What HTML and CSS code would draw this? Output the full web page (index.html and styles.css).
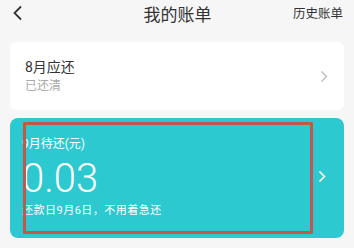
FILE: index.html
```html
<!DOCTYPE html>
<html lang="zh-CN">

<head>
  <meta charset="UTF-8">
  <meta name="viewport" content="width=device-width, initial-scale=1.0">
  <title>我的账单</title>
  <link rel="stylesheet" href="styles.css">
</head>

<body>
  <!-- 顶部导航 -->
  <div class="header">
    <span class="back">
      <svg width="11" height="16" viewBox="0 0 11 16">
        <polyline points="9,1.5 2.5,8 9,14.5" fill="none" stroke="#333" stroke-width="1.8" />
      </svg>
    </span>
    <span class="title">我的账单</span>
    <span class="history">历史账单</span>
  </div>

  <!-- 上月账单 -->
  <div class="card bill-paid">
    <div class="bill-info">
      <div class="bill-month">8月应还</div>
      <div class="bill-status">已还清</div>
    </div>
    <svg class="arrow" width="8" height="13" viewBox="0 0 8 13">
      <polyline points="1.5,1.5 6.5,6.5 1.5,11.5" fill="none" stroke="#bbb" stroke-width="1.3" />
    </svg>
  </div>

  <!-- 本月待还 -->
  <div class="card bill-due">
    <div class="bill-info">
      <div class="due-label">9月待还(元)</div>
      <div class="due-amount">0.03</div>
      <div class="due-tip">还款日9月6日，不用着急还</div>
    </div>
    <svg class="arrow" width="8" height="13" viewBox="0 0 8 13">
      <polyline points="1.5,1.5 6.5,6.5 1.5,11.5" fill="none" stroke="#fff" stroke-width="1.6" />
    </svg>
    <div class="mark"></div>
  </div>
</body>

</html>
```

FILE: styles.css
```css
body {
  margin: 0;
  padding: 0;
  background-color: #f6f6f6;
  font-family: Roboto, "Noto Sans CJK SC", sans-serif;
  color: #333;
}

.header {
  display: grid;
  grid-template-columns: 1fr auto 1fr;
  align-items: center;
  height: 28px;
  padding: 0 11px 0 12px;
}

.back {
  display: flex;
  align-items: center;
  margin-top: -3px;
}

.title {
  font-size: 17px;
  line-height: 20px;
  color: #333;
  margin-top: 2px;
}

.history {
  justify-self: end;
  font-size: 12.5px;
  line-height: 16px;
  color: #333;
}

.card {
  position: relative;
  display: flex;
  align-items: center;
  justify-content: space-between;
  margin: 0 10px;
  box-sizing: border-box;
}

.bill-paid {
  margin-top: 14px;
  height: 68px;
  padding: 0 16px 0 15px;
  background-color: #fff;
  border-radius: 6px;
}

.bill-month {
  font-size: 14px;
  line-height: 18px;
  color: #333;
}

.bill-status {
  margin-top: 2px;
  font-size: 12px;
  line-height: 16px;
  color: #aaa;
}

.bill-due {
  margin-top: 8px;
  height: 120px;
  padding: 0 18px 0 12px;
  background-color: #2cc9d1;
  border-radius: 8px;
  color: #fff;
}

.bill-due .arrow {
  margin-top: -4px;
}

.due-label {
  font-size: 12px;
  line-height: 16px;
  margin-top: -3px;
}

.due-amount {
  margin-top: 7px;
  font-size: 40px;
  font-weight: 300;
  line-height: 40px;
}

.due-tip {
  margin-top: 5px;
  font-size: 11px;
  line-height: 14px;
  letter-spacing: 0.5px;
}

/* 红框标注 */
.mark {
  position: absolute;
  left: 13px;
  top: 4px;
  width: 284px;
  height: 106px;
  border: 3px solid #c4564f;
  border-radius: 1px;
}
```
